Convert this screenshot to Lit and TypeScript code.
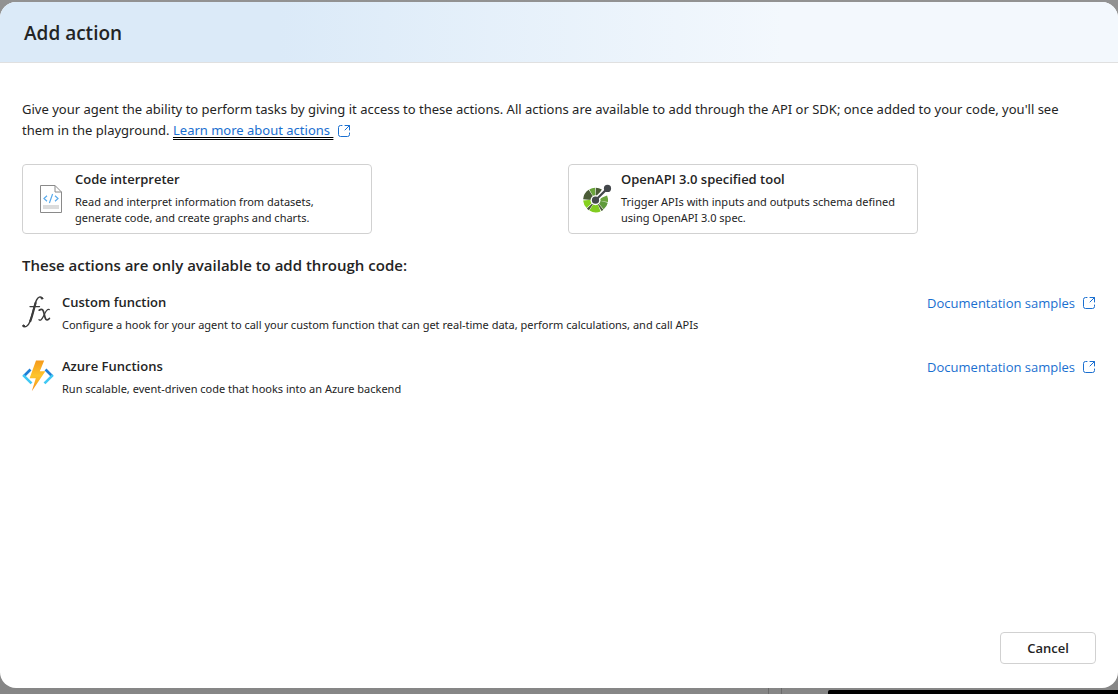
import { LitElement, html, css, svg } from "lit";
import { customElement, property } from "lit/decorators.js";

const codeIcon = svg`<svg width="24" height="30" viewBox="0 0 24 30" fill="none" aria-hidden="true">
  <path d="M1.5 1.5H16L22.5 8V28.5H1.5Z" fill="#fff" stroke="#8a8a8a"/>
  <path d="M16 1.5V8H22.5" stroke="#8a8a8a"/>
  <rect x="4" y="21" width="16" height="4" fill="#dcdcdc"/>
  <path d="M8 11.8L5 14.5L8 17.2M16 11.8L19 14.5L16 17.2M13.6 10L10.4 19" stroke="#5aabec" stroke-width="1.2"/>
</svg>`;

const openApiIcon = svg`<svg width="30" height="30" viewBox="0 0 30 30" fill="none" aria-hidden="true">
  <g stroke-width="8">
    <path d="M5.1 15.6A8.5 8.5 0 0 1 8.9 9.2" stroke="#4b5c37"/>
    <path d="M9.3 9A8.5 8.5 0 0 1 13.3 7.8" stroke="#6aa33c"/>
    <path d="M13.8 7.8A8.5 8.5 0 0 1 17.9 8.9" stroke="#4b5c37"/>
    <path d="M21.4 13A8.5 8.5 0 0 1 22 17.500" stroke="#6aa33c"/>
    <path d="M21.9 17.8A8.5 8.5 0 0 1 19.1 22.300" stroke="#5f9a3b"/>
    <path d="M18.8 22.6A8.5 8.5 0 0 1 17.5 23.500" stroke="#4b5c37"/>
    <path d="M17.1 23.8A8.5 8.5 0 0 1 9.5 23.200" stroke="#82cc21"/>
    <path d="M9.2 22.9A8.5 8.5 0 0 1 7.8 21.700" stroke="#4b5c37"/>
    <path d="M7.5 21.3A8.5 8.5 0 0 1 5.1 16.200" stroke="#86d11f"/>
  </g>
  <circle cx="13.5" cy="16.2" r="5" fill="#fff"/>
  <path d="M13.5 16.2L25.5 4.4" stroke="#fff" stroke-width="5"/>
  <path d="M13.5 16.2L25.5 4.4" stroke="#43474b" stroke-width="2.2"/>
  <circle cx="13.5" cy="16.2" r="3.6" fill="#43474b"/>
  <circle cx="25.5" cy="4.400" r="3.6" fill="#43474b"/>
</svg>`;

const functionIcon = svg`<svg width="32" height="32" viewBox="0 0 32 32" fill="none" stroke="#3b3b3b" stroke-linecap="round" aria-hidden="true">
  <path d="M20.3 2.2C18.4.2 16 .8 14.4 4.400C12.2 9.400 10.700 18.600 8 25.400C6.200 30.100 3 32 1.200 30" stroke-width="1.4"/>
  <path d="M13.600 7C11.700 13 10.500 19.500 8.300 25" stroke-width="2.200"/>
  <circle cx="20" cy="2.400" r=".8" fill="#3b3b3b"/>
  <circle cx="1.600" cy="29.800" r=".9" fill="#3b3b3b"/>
  <path d="M8 10.600H17.500" stroke-width="1.300"/>
  <path d="M17.200 14.200C20.500 11.800 21.400 14.500 22.200 18C23 22 24 26.200 27.400 22.500" stroke-width="1.700"/>
  <path d="M27.300 13.600C24.500 12.300 23.500 16.500 21.400 20.400C19.700 23.600 18.500 25 17 23.700" stroke-width="1.200"/>
</svg>`;

const azureIcon = svg`<svg width="32" height="32" viewBox="0 0 32 32" fill="none" aria-hidden="true">
  <defs>
    <linearGradient id="bolt" x1="0" y1="0" x2="0" y2="1">
      <stop offset="0" stop-color="#f59a1c"/><stop offset=".5" stop-color="#fdc52c"/><stop offset="1" stop-color="#f68d1a"/>
    </linearGradient>
  </defs>
  <path d="M8.500 9.500L1.500 16.500" stroke="#1f7fd6" stroke-width="2.600"/>
  <path d="M1.200 15.200L9.500 23.400" stroke="#40c8f4" stroke-width="2.600"/>
  <path d="M23.500 9.500L30.500 16.500" stroke="#1f7fd6" stroke-width="2.600"/>
  <path d="M30.800 15.200L22.500 23.400" stroke="#40c8f4" stroke-width="2.600"/>
  <path d="M14 0.500H22.200L17.800 11.200H23.400L9.800 31.300L13.800 18.300H7.600Z" fill="url(#bolt)"/>
</svg>`;

const openIcon = svg`<svg width="14" height="14" viewBox="0 0 14 14" fill="none" stroke="currentColor" stroke-linecap="round" stroke-linejoin="round" aria-hidden="true">
  <path d="M5 1.500H3.500A2 2 0 0 0 1.500 3.500V10.500A2 2 0 0 0 3.500 12.500H10.500A2 2 0 0 0 12.500 10.500V9M8 1.500H12.500V6M12.500 1.500L8 6"/>
</svg>`;

@customElement("action-card")
class ActionCard extends LitElement {
  @property() heading = "";
  @property() text = "";
  @property({ attribute: false }) icon: unknown;

  static styles = css`
    :host { display: block; max-width: 350px; }
    .card {
      display: grid; grid-template-columns: 30px 1fr; gap: 9px; align-items: center;
      box-sizing: border-box; width: 100%; min-height: 70px; padding: 4px 12px 4px 13px;
      border: 1px solid #d1d1d1; border-radius: 4px; background: #fff;
      color: #242424; font-family: inherit; text-align: left; cursor: pointer;
    }
    .icon { display: grid; place-items: center; }
    .heading { display: block; font-family: "Open Sans", sans-serif; font-size: 13px; line-height: 20px; font-weight: 600; padding-bottom: 5px; }
    .text { display: block; font-size: 11px; line-height: 16px; padding-bottom: 3px; }
  `;

  render() {
    return html`<button class="card" type="button">
      <span class="icon">${this.icon}</span>
      <span><span class="heading">${this.heading}</span><span class="text">${this.text}</span></span>
    </button>`;
  }
}

@customElement("code-action")
class CodeAction extends LitElement {
  @property() heading = "";
  @property() text = "";
  @property({ attribute: false }) icon: unknown;

  static styles = css`
    :host { display: grid; grid-template-columns: 32px 1fr auto; gap: 8px; align-items: start; }
    .icon { display: grid; padding-top: 4px; }
    .heading { margin: 0; font-family: "Open Sans", sans-serif; font-size: 13px; line-height: 20px; font-weight: 600; }
    .text { margin: 5px 0 0; font-size: 11px; line-height: 16px; }
    .link { display: flex; align-items: center; gap: 7px; color: #1a6fd0; font-family: "Open Sans", sans-serif; font-size: 13px; line-height: 22px; text-decoration: none; }
  `;

  render() {
    return html`
      <span class="icon">${this.icon}</span>
      <div><h3 class="heading">${this.heading}</h3><p class="text">${this.text}</p></div>
      <a class="link" href="#">Documentation samples ${openIcon}</a>
    `;
  }
}

@customElement("app-root")
class AppRoot extends LitElement {
  static styles = css`
    :host {
      display: grid; grid-template-rows: 2px 1fr 6px; min-height: 100vh;
      background: linear-gradient(#929292, #868686);
      color: #242424; font-family: "Noto Sans", "Open Sans", sans-serif; font-size: 13px;
    }
    .dialog {
      grid-row: 2; display: flex; flex-direction: column; overflow: hidden;
      background: #fff; border-radius: 16px;
    }
    .header {
      padding: 17px 24px 15px; border-bottom: 1px solid #e0e0e0;
      background: linear-gradient(90deg, #dbeaf8 25%, #f3f8fd 70%);
    }
    .title { margin: 0; font-family: "Open Sans", sans-serif; font-size: 19px; line-height: 28px; font-weight: 600; }
    .body { flex: 1; padding: 36px 22px 24px; }
    .intro { margin: 0; padding-right: 18px; line-height: 21px; }
    .learn { display: inline-flex; align-items: center; gap: 4px; color: #1a6fd0; text-decoration: none; }
    .learn-text { text-decoration: underline double #000 1px; text-underline-offset: 2px; }
    .cards { display: grid; grid-template-columns: 1fr 1fr; gap: 18px; margin-top: 23px; }
    .subtitle { margin: 20px 0 16px; font-family: "Open Sans", sans-serif; font-size: 15px; line-height: 22px; font-weight: 600; }
    .list { display: grid; gap: 23px; }
    .footer { display: flex; justify-content: flex-end; padding: 0 22px 24px; }
    .cancel {
      min-width: 96px; height: 32px; border: 1px solid #d1d1d1; border-radius: 4px; background: #fff;
      color: #242424; font-family: "Open Sans", sans-serif; font-size: 13px; font-weight: 600; cursor: pointer;
    }
    .backdrop { grid-row: 3; display: grid; grid-template-columns: 768px 13px 47px 1fr; }
    .pane { border-left: 1px solid #6c6c6c; }
    .dark { background: #000; margin-top: 2px; border-top-left-radius: 2px; }
  `;

  render() {
    return html`
      <main class="dialog" role="dialog" aria-labelledby="title">
        <header class="header"><h1 class="title" id="title">Add action</h1></header>
        <div class="body">
          <p class="intro">Give your agent the ability to perform tasks by giving it access to these actions. All actions are available to add through the API or SDK; once added to your code, you'll see them in the playground. <a class="learn" href="#"><span class="learn-text">Learn more about actions&nbsp;</span>${openIcon}</a></p>
          <div class="cards">
            <action-card heading="Code interpreter" text="Read and interpret information from datasets, generate code, and create graphs and charts." .icon=${codeIcon}></action-card>
            <action-card heading="OpenAPI 3.0 specified tool" text="Trigger APIs with inputs and outputs schema defined using OpenAPI 3.0 spec." .icon=${openApiIcon}></action-card>
          </div>
          <h2 class="subtitle">These actions are only available to add through code:</h2>
          <div class="list">
            <code-action heading="Custom function" text="Configure a hook for your agent to call your custom function that can get real-time data, perform calculations, and call APIs" .icon=${functionIcon}></code-action>
            <code-action heading="Azure Functions" text="Run scalable, event-driven code that hooks into an Azure backend" .icon=${azureIcon}></code-action>
          </div>
        </div>
        <footer class="footer"><button class="cancel" type="button">Cancel</button></footer>
      </main>
      <div class="backdrop"><span></span><span class="pane"></span><span class="pane"></span><span class="dark"></span></div>
    `;
  }
}
